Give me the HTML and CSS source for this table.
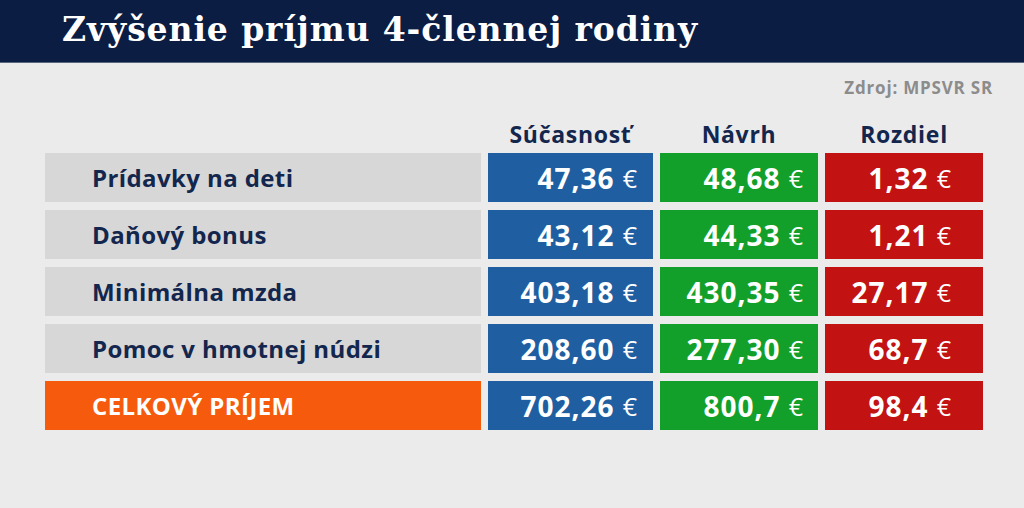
FILE: index.html
```html
<!DOCTYPE html>
<html lang="sk">
<head>
<meta charset="utf-8">
<title>Zvýšenie príjmu 4-člennej rodiny</title>
<link rel="stylesheet" href="styles.css">
</head>
<body>
<header class="topbar">
  <h1 class="title">Zvýšenie príjmu 4-člennej rodiny</h1>
</header>
<main class="content">
  <div class="source">Zdroj: MPSVR SR</div>
  <div class="table">
    <div class="colhead empty"></div>
    <div class="colhead">Súčasnosť</div>
    <div class="colhead">Návrh</div>
    <div class="colhead">Rozdiel</div>

    <div class="label">Prídavky na deti</div>
    <div class="val now">47,36 <span class="eur">€</span></div>
    <div class="val prop">48,68 <span class="eur">€</span></div>
    <div class="val diff">1,32 <span class="eur">€</span></div>

    <div class="label">Daňový bonus</div>
    <div class="val now">43,12 <span class="eur">€</span></div>
    <div class="val prop">44,33 <span class="eur">€</span></div>
    <div class="val diff">1,21 <span class="eur">€</span></div>

    <div class="label">Minimálna mzda</div>
    <div class="val now">403,18 <span class="eur">€</span></div>
    <div class="val prop">430,35 <span class="eur">€</span></div>
    <div class="val diff">27,17 <span class="eur">€</span></div>

    <div class="label">Pomoc v hmotnej núdzi</div>
    <div class="val now">208,60 <span class="eur">€</span></div>
    <div class="val prop">277,30 <span class="eur">€</span></div>
    <div class="val diff">68,7 <span class="eur">€</span></div>

    <div class="label total">CELKOVÝ PRÍJEM</div>
    <div class="val now">702,26 <span class="eur">€</span></div>
    <div class="val prop">800,7 <span class="eur">€</span></div>
    <div class="val diff">98,4 <span class="eur">€</span></div>
  </div>
</main>
</body>
</html>
```
FILE: styles.css
```css
html, body {
  margin: 0;
  padding: 0;
}
body {
  width: 1024px;
  height: 508px;
  overflow: hidden;
  background: #ebebeb;
  font-family: "Open Sans", "Noto Sans", sans-serif;
}
.topbar {
  height: 62px;
  background: #0b1d42;
  border-bottom: 1px solid #5a6680;
  display: flex;
  align-items: center;
  padding-left: 62px;
}
.title {
  margin: 0;
  color: #ffffff;
  font-family: "DejaVu Serif", serif;
  font-weight: bold;
  font-size: 33px;
  letter-spacing: 0.9px;
  line-height: 1;
  padding-bottom: 4px;
}
.content {
  padding: 15px 0 0 45px;
}
.source {
  text-align: right;
  padding-right: 31px;
  color: #8c8c8c;
  font-weight: bold;
  font-size: 17px;
  letter-spacing: 0.8px;
  line-height: 20px;
}
.table {
  display: grid;
  grid-template-columns: 436px 165px 158px 158px;
  grid-template-rows: 36px repeat(5, 49px);
  column-gap: 7px;
  row-gap: 8px;
  margin-top: 11px;
}
.colhead {
  color: #13264d;
  font-weight: bold;
  font-size: 23px;
  letter-spacing: 0.7px;
  display: flex;
  align-items: flex-end;
  justify-content: center;
  line-height: 1;
  padding-bottom: 7px;
  margin-bottom: -8px;
}
.label {
  background: #d7d7d7;
  color: #13264d;
  font-weight: bold;
  font-size: 24px;
  letter-spacing: 0.4px;
  display: flex;
  align-items: center;
  padding-left: 47px;
}
.label.total {
  background: #f65a0c;
  color: #ffffff;
}
.val {
  color: #ffffff;
  font-weight: bold;
  font-size: 28px;
  letter-spacing: 1px;
  display: flex;
  align-items: center;
  justify-content: flex-end;
  white-space: pre;
}
.eur {
  font-weight: normal;
  font-size: 25px;
  letter-spacing: 0;
}
.now {
  background: #1f5fa1;
  padding-right: 16px;
}
.prop {
  background: #13a02a;
  padding-right: 15px;
}
.diff {
  background: #c21212;
  padding-right: 32px;
}
```
